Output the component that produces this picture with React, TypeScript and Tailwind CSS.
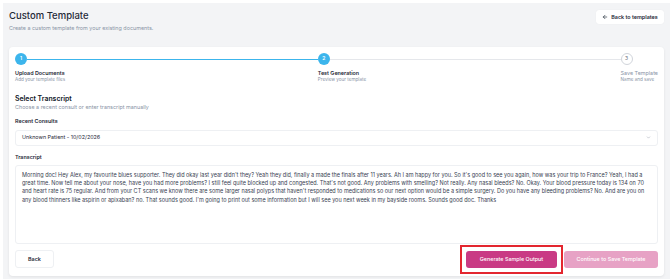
import React from "react";

const transcript =
  "Morning doc! Hey Alex, my favourite blues supporter. They did okay last year didn't they? Yeah they did, finally a made the finals after 11 years. Ah I am happy for you. So it's good to see you again, how was your trip to France? Yeah, I had a great time. Now tell me about your nose, have you had more problems? I still feel quite blocked up and congested. That's not good. Any problems with smelling? Not really. Any nasal bleeds? No. Okay. Your blood pressure today is 134 on 70 and heart rate is 75 regular. And from your CT scans we know there are some larger nasal polyps that haven't responded to medications so our next option would be a simple surgery. Do you have any bleeding problems? No. And are you on any blood thinners like aspirin or apixaban? no. That sounds good. I'm going to print out some information but I will see you next week in my bayside rooms. Sounds good doc. Thanks";

export default function App() {
  return (
    <div
      className="w-[670px] h-[279px] bg-white pt-[3px] pl-[3px] overflow-hidden"
      style={{ fontFamily: "Inter, 'Noto Sans', sans-serif" }}
    >
      <div className="h-full bg-[#f3f4f6] pl-[6px] pr-[6px] pt-[6px]">
        <div className="flex items-start justify-between">
          <div>
            <h1 className="text-[9.5px] leading-[13px] text-[#1f2937] font-medium">Custom Template</h1>
            <p className="text-[5.4px] leading-[7px] text-[#8a94a6] mt-[3px]">
              Create a custom template from your existing documents.
            </p>
          </div>
          <button className="mt-[1px] h-[14px] w-[68px] flex items-center justify-center gap-[3px] bg-white rounded-[3px] text-[5.4px] font-semibold text-[#1f2937] shadow-[0_0_1px_rgba(0,0,0,0.08)]">
            <svg width="6" height="6" viewBox="0 0 24 24" fill="none" stroke="#1f2937" strokeWidth="2.5" strokeLinecap="round" strokeLinejoin="round">
              <path d="M19 12H5" />
              <path d="M12 19l-7-7 7-7" />
            </svg>
            Back to templates
          </button>
        </div>

        <div className="mt-[15px] bg-white rounded-[4px] shadow-[0_1px_3px_rgba(0,0,0,0.08)] px-[6px] pt-[6px] pb-[3px]">
          {/* Stepper */}
          <div className="flex">
            <div className="flex-1 flex flex-col">
              <div className="flex items-center">
                <div className="w-[12px] h-[12px] rounded-full bg-[#3cb5ec] text-white text-[5px] font-semibold flex items-center justify-center shrink-0">1</div>
                <div className="flex-1 h-[1px] bg-[#3cb5ec]" />
              </div>
              <div className="mt-[5px] text-[5.4px] leading-[7px] font-semibold text-[#1f2937]">Upload Documents</div>
              <div className="text-[4.6px] leading-[6px] text-[#8a94a6]">Add your template files</div>
            </div>
            <div className="flex-1 flex flex-col">
              <div className="flex items-center">
                <div className="w-[12px] h-[12px] rounded-full bg-[#3cb5ec] text-white text-[5px] font-semibold flex items-center justify-center shrink-0">2</div>
                <div className="flex-1 h-[1px] bg-[#e5e7eb]" />
              </div>
              <div className="mt-[5px] text-[5.4px] leading-[7px] font-semibold text-[#1f2937]">Test Generation</div>
              <div className="text-[4.6px] leading-[6px] text-[#8a94a6]">Preview your template</div>
            </div>
            <div className="flex flex-col">
              <div className="flex items-center">
                <div className="w-[12px] h-[12px] rounded-full bg-white border border-[#d1d5db] text-[#6b7280] text-[5px] flex items-center justify-center shrink-0">3</div>
              </div>
              <div className="mt-[5px] text-[5.4px] leading-[7px] text-[#8a94a6]">Save Template</div>
              <div className="text-[4.6px] leading-[6px] text-[#8a94a6]">Name and save</div>
            </div>
          </div>

          {/* Select transcript */}
          <div className="mt-[10.5px]">
            <h2 className="text-[6.9px] leading-[9px] font-semibold text-[#111827]">Select Transcript</h2>
            <p className="text-[5.4px] leading-[8px] text-[#8a94a6]">Choose a recent consult or enter transcript manually</p>
          </div>

          <div className="mt-[7.5px] text-[5.4px] leading-[7px] font-semibold text-[#1f2937]">Recent Consults</div>
          <div className="mt-[4.5px] h-[16px] border border-[#eef0f3] rounded-[3px] flex items-center justify-between pl-[6px] pr-[6px] text-[5.4px] text-[#1f2937]">
            <span>Unknown Patient - 10/02/2026</span>
            <svg width="5" height="5" viewBox="0 0 24 24" fill="none" stroke="#9ca3af" strokeWidth="2.5" strokeLinecap="round" strokeLinejoin="round">
              <path d="M6 9l6 6 6-6" />
            </svg>
          </div>

          <div className="mt-[8.5px] text-[5.4px] leading-[7px] font-semibold text-[#1f2937]">Transcript</div>
          <div className="mt-[3.5px] h-[79px] border border-[#eef0f3] rounded-[3px] px-[6px] pt-[5px] text-[5.5px] leading-[8.4px] text-[#374151]">
            {transcript}
          </div>

          <div className="mt-[2px] h-[27px] flex items-center justify-between">
            <button className="h-[18px] w-[39px] border border-[#eef0f3] rounded-[3px] bg-white text-[5.4px] font-semibold text-[#1f2937]">Back</button>
            <div className="flex items-center gap-[7px]">
              <div className="-m-[6px] p-[4px] border-2 border-[#e3262f]">
                <button className="block h-[17px] w-[91px] rounded-[3px] bg-[#c93a84] text-white text-[5.4px] font-medium">
                  Generate Sample Output
                </button>
              </div>
              <button className="h-[17px] w-[94px] rounded-[3px] bg-[#e7a2c5] text-white text-[5.4px] font-medium">
                Continue to Save Template
              </button>
            </div>
          </div>
        </div>
      </div>
    </div>
  );
}
